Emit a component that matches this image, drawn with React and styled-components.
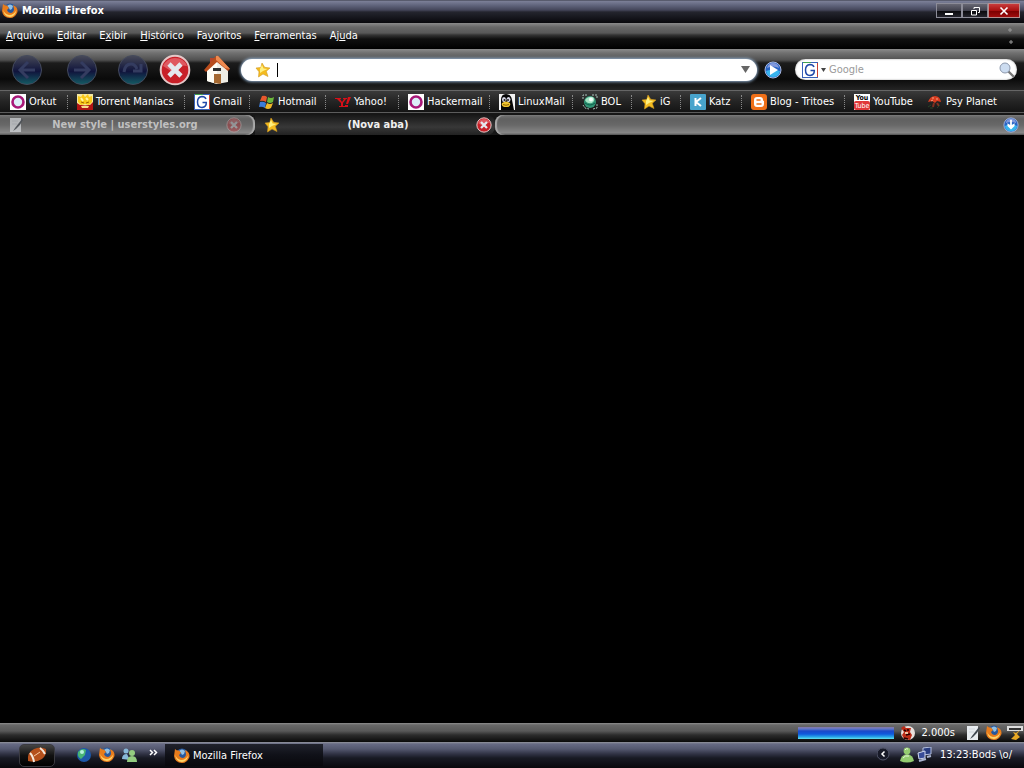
import React from 'react';
import styled, { createGlobalStyle } from 'styled-components';

const GlobalStyle = createGlobalStyle`
  * {
    box-sizing: border-box;
  }
  body {
    margin: 0;
    background: #000;
    color: #fff;
    font-family: "DejaVu Sans Condensed", "DejaVu Sans", sans-serif;
    font-size: 11px;
    line-height: 14px;
  }
  button, input {
    font: inherit;
    color: inherit;
  }
  svg {
    display: block;
    flex: none;
  }
`;

const Desktop = styled.div`
  display: flex;
  flex-direction: column;
  min-height: 100vh;
`;

const TitleBar = styled.header`
  display: flex;
  align-items: center;
  height: 23px;
  padding: 0 4px 2px 2px;
  gap: 4px;
  background: linear-gradient(#343642 0, #7c8098 1px, #62667e 5px, #44465a 10px, #24252e 12px, #08080c 100%);
`;

const WindowTitle = styled.h1`
  flex: 1;
  margin: 0;
  font-size: 11px;
  line-height: 14px;
`;

const WindowButtons = styled.div`
  display: flex;
`;

const WindowButton = styled.button`
  display: flex;
  align-items: center;
  justify-content: center;
  width: ${({ $close }) => ($close ? '32px' : '26px')};
  height: 15px;
  padding: 0;
  border: 1px solid ${({ $close }) => ($close ? '#b89090' : '#8c8c98')};
  background: ${({ $close }) =>
    $close
      ? 'linear-gradient(#c83c3c, #a81010 50%, #780000 51%, #a00c0c)'
      : 'linear-gradient(#686874, #40404c 50%, #08080c 51%, #24242c)'};
`;

const MenuBar = styled.nav`
  display: flex;
  align-items: center;
  height: 26px;
  padding: 0 10px 0 6px;
  gap: 13px;
  background: linear-gradient(#8a8a8a 0, #686868 4px, #585858 10px, #343434 12px, #101010 16px, #000 100%);
`;

const MenuLink = styled.a`
  color: #fff;
  text-decoration: none;
`;

const Throbber = styled.div`
  margin-left: auto;
`;

const Toolbar = styled.div`
  display: flex;
  align-items: center;
  height: 41px;
  padding: 0 7px 0 11px;
  background: linear-gradient(#8c8c8c 0, #707070 4px, #505050 11px, #1c1c1c 14px, #0a0a0a 30px, #242424 100%);
`;

const NavButtons = styled.div`
  display: flex;
  align-items: center;
  flex: none;
  width: 230px;
`;

const NavButton = styled.button`
  display: flex;
  justify-content: center;
  width: 32px;
  margin-right: ${({ $gap }) => $gap || 0}px;
  padding: 0;
  border: 0;
  background: none;
`;

const AddressBox = styled.div`
  display: flex;
  align-items: center;
  flex: 1;
  height: 22px;
  padding: 0 7px 0 14px;
  gap: 6px;
  border-radius: 11px;
  background: #fff;
  box-shadow: 0 0 3px 1px #8ea8c4;
`;

const Field = styled.input`
  flex: 1;
  min-width: 0;
  padding: 0;
  border: 0;
  outline: 0;
  background: transparent;
  color: #000;

  &::placeholder {
    color: #9a9a9a;
    opacity: 1;
  }
`;

const Caret = styled.span`
  width: 1px;
  height: 14px;
  background: #000;
`;

const GoButton = styled.button`
  flex: none;
  margin: 0 13px 0 7px;
  padding: 0;
  border: 0;
  background: none;
`;

const SearchBox = styled.div`
  display: flex;
  align-items: center;
  flex: none;
  width: 222px;
  height: 21px;
  padding: 0 2px 0 7px;
  gap: 3px;
  border-radius: 11px;
  background: #fff;
  box-shadow: inset 0 0 2px #999;
`;

const BookmarksBar = styled.nav`
  display: flex;
  align-items: center;
  height: 23px;
  padding: 1px 0 0 10px;
  border-top: 1px solid #666;
  border-bottom: 1px solid #5c5c5c;
  background: linear-gradient(#3a3a3a, #242424 50%, #141414);
  overflow: hidden;
`;

const Bookmark = styled.a`
  display: flex;
  align-items: center;
  flex: none;
  width: ${({ $width }) => $width}px;
  gap: 3px;
  padding-right: 9px;
  color: #fff;
  white-space: nowrap;
  text-decoration: none;
`;

const Divider = styled.span`
  height: 14px;
  margin-left: auto;
  border-left: 1px dotted #888;
`;

const TabStrip = styled.div`
  display: flex;
  height: 22px;
  padding: 2px 0 0;
  background: #161616;
`;

const grey = 'linear-gradient(#747474 0, #606060 4px, #686868 10px, #888 18px, #444 100%)';

const Tab = styled.div`
  display: flex;
  align-items: center;
  flex: none;
  width: ${({ $active }) => ($active ? '240px' : '255px')};
  padding: ${({ $active }) => ($active ? '0 3px 0 9px' : '0 13px 0 8px')};
  border-radius: 0 8px 8px 0;
  background: ${({ $active }) =>
    $active ? 'linear-gradient(#181818, #383838 60%, #222)' : grey};
  box-shadow: ${({ $active }) => ($active ? 'none' : 'inset -2px 0 1px #aaa')};
  color: ${({ $active }) => ($active ? '#f0f0f0' : '#c0c0c0')};
`;

const TabTitle = styled.button`
  flex: 1;
  padding: 0;
  border: 0;
  background: none;
  font-weight: bold;
  white-space: nowrap;
`;

const TabClose = styled.button`
  padding: 0;
  border: 0;
  background: none;
  opacity: ${({ $dim }) => ($dim ? 0.35 : 1)};
`;

const TabSpace = styled.div`
  display: flex;
  align-items: center;
  justify-content: flex-end;
  flex: 1;
  padding-right: 5px;
  border-radius: 8px 0 0 8px;
  background: ${grey};
  box-shadow: inset 2px 0 1px #aaa;
`;

const Page = styled.main`
  flex: 1;
  background: #000;
`;

const StatusBar = styled.footer`
  display: flex;
  align-items: center;
  justify-content: flex-end;
  height: 19px;
  gap: 6px;
  background: linear-gradient(#8e8e8e 0, #686868 2px, #585858 8px, #2c2c2c 12px, #0a0a0a 100%);
`;

const LoadBar = styled.div`
  width: 96px;
  height: 12px;
  background: linear-gradient(#8878a8 0, #6078c8 2px, #1c48c8 4px, #1058dc 7px, #28a8e8 10px, #68e4ee 100%);
`;

const StatusIcons = styled.div`
  display: flex;
  gap: 5px;
  padding: 0 1px 0 4px;
`;

const Taskbar = styled.footer`
  display: flex;
  align-items: center;
  height: 26px;
  padding: 0 12px 0 19px;
  background: linear-gradient(#92949c 0, #666a84 2px, #54586f 7px, #303244 12px, #181a24 16px, #08080c 100%);
`;

const StartButton = styled.button`
  display: flex;
  align-items: center;
  justify-content: center;
  width: 36px;
  height: 23px;
  padding: 0;
  border: 1px solid #3a3a40;
  border-radius: 5px;
  background: linear-gradient(#444, #111 50%, #000);
`;

const QuickLaunch = styled.div`
  display: flex;
  align-items: center;
  gap: 7px;
  width: 110px;
  padding-left: 21px;
`;

const TaskButton = styled.button`
  display: flex;
  align-items: center;
  width: 158px;
  height: 22px;
  padding: 2px 9px 0;
  gap: 3px;
  border: 0;
  background: linear-gradient(#20222c, #101118 50%, #08080c);
`;

const Tray = styled.div`
  display: flex;
  align-items: center;
  margin-left: auto;
  gap: 3px;
`;

const Clock = styled.span`
  margin-left: 4px;
`;

const Firefox = ({ size = 16 }) => (
  <svg width={size} height={size} viewBox="0 0 16 16">
    <circle cx="8" cy="6.5" r="6" fill="#28589c" />
    <path d="M5 3Q8 0 11 3L10 6 8 7 7 5Z" fill="#90c0e4" />
    <path d="M1 1Q3 3 5 2.5L7 5 5 7Q6 10 9 10Q12 9 12 6L11 2Q16 4 15.5 9Q13 15 8 15Q1 15 0 8Z" fill="#e87c1c" />
    <path d="M1 6Q2 11 7 12Q12 12 14.5 7Q13 14 8 14Q2 14 1 6Z" fill="#ffd468" />
  </svg>
);

const Star = () => (
  <svg width="16" height="16" viewBox="0 0 16 16">
    <path d="M7 1L9.7 5.3 15 6 11.3 9.3 13 14.5 8 12 3.5 15 4 9.8 1 6 5.8 5.5Z" fill="#f4bc20" stroke="#d09820" strokeWidth=".6" />
    <path d="M7 3L8.6 6.4 12.5 7 8 9 5 11 5 7Z" fill="#fff080" />
  </svg>
);

const Ring = () => (
  <svg width="16" height="16" viewBox="0 0 16 16">
    <rect width="16" height="16" fill="#fff" />
    <circle cx="8" cy="8" r="5.5" fill="#dceef8" stroke="#a81878" strokeWidth="2.6" />
  </svg>
);

const GoogleG = () => (
  <svg width="16" height="16" viewBox="0 0 16 16">
    <rect x=".5" y=".5" width="15" height="15" fill="#fff" stroke="#3860b8" />
    <path d="M15.5 1V15" stroke="#c84030" />
    <path d="M1 .5H9" stroke="#40a050" />
    <path d="M12 5Q11 2.5 8 2.5Q3.5 3 3.5 8Q3.5 13.5 8 13.5Q12.5 13 12.3 8.5H8.5" fill="none" stroke="#2048a8" strokeWidth="1.5" />
  </svg>
);

const Torrent = () => (
  <svg width="16" height="16" viewBox="0 0 16 16">
    <rect width="16" height="16" fill="#f4e8a0" />
    <path d="M0 9L3 11 13 11 16 8V16H0Z" fill="#b01414" />
    <path d="M1 2L4 3 6 0 8 3 11 0 12 3 15 2V8L12 11 8 10 4 11 1 8Z" fill="#f8c818" />
    <path d="M4 4L6 7M9 4L11 6" stroke="#fff4a0" strokeWidth="2" />
    <path d="M4 8L7 9M9 9L12 8" stroke="#a06000" />
    <path d="M4 12Q8 11 12 12L11 14H5Z" fill="#f8dc88" />
  </svg>
);

const Windows = () => (
  <svg width="16" height="16" viewBox="0 0 16 16">
    <path d="M3 2Q6 1 8 3L7 8Q4 6 1 7Z" fill="#e8582c" />
    <path d="M9 3Q12 5 15 3L14 8Q11 10 8 8Z" fill="#6cb83c" />
    <path d="M1 8Q4 7 7 9L6 14Q3 12 0 13Z" fill="#3c7cd8" />
    <path d="M8 9Q11 11 14 9L12 14Q9 16 6 14Z" fill="#f0b828" />
  </svg>
);

const Yahoo = () => (
  <svg width="16" height="16" viewBox="0 0 16 16">
    <path d="M0 4H6V5H5L7 8 9 5H8V4H12V5H11L8 9V12H10V13H4V12H6V9L2 5H0ZM13 3H16L13 10H11ZM10 11H13V13H10Z" fill="#d81018" />
  </svg>
);

const Penguin = () => (
  <svg width="16" height="16" viewBox="0 0 16 16">
    <rect width="16" height="16" fill="#f4f4f4" />
    <path d="M2 16V6Q2 0 7 0Q12 0 13 6L15 16Z" fill="#060606" />
    <ellipse cx="5" cy="5.5" rx="2" ry="2.5" fill="#d8d8e8" />
    <ellipse cx="9.5" cy="5.5" rx="2" ry="2.5" fill="#d8d8e8" />
    <circle cx="5.5" cy="6" r="1" fill="#222" />
    <circle cx="9" cy="6" r="1" fill="#222" />
    <path d="M3 9Q7 6 11 9Q12 12 9 13H5Q2 12 3 9Z" fill="#f0c430" />
    <path d="M4 10.5Q7 12 10 10.5" stroke="#8c6400" fill="none" />
  </svg>
);

const Bol = () => (
  <svg width="16" height="16" viewBox="0 0 16 16">
    <circle cx="8" cy="8" r="6" fill="#309474" />
    <path d="M3 6Q6 2 11 3Q14 6 10 9Q5 10 3 6Z" fill="#a4e4c4" />
    <circle cx="9" cy="5.5" r="2" fill="#f0fff8" />
    <path d="M1 5V1H6M10 1H15V5M1 11L3 14 7 15M11 15L15 14V10" stroke="#a8c0b8" fill="none" strokeDasharray="2 1" />
    <path d="M3 9Q8 13 13 9" stroke="#0c604c" fill="none" />
  </svg>
);

const Katz = () => (
  <svg width="16" height="16" viewBox="0 0 16 16">
    <rect width="16" height="16" rx="1" fill="#48a4cc" />
    <path d="M5.5 4V12M11 4L6 8 11 12" stroke="#fff" strokeWidth="2" fill="none" />
  </svg>
);

const Blogger = () => (
  <svg width="16" height="16" viewBox="0 0 16 16">
    <rect width="16" height="16" rx="3" fill="#f07018" />
    <path d="M6 3H9Q12 3 12 6Q12 7 13 7V10Q13 13 10 13H6Q3 13 3 10V6Q3 3 6 3Z" fill="#fff" />
    <path d="M6 6H9M6 10H10" stroke="#f07018" strokeWidth="1.5" strokeLinecap="round" />
  </svg>
);

const YouTube = () => (
  <svg width="16" height="16" viewBox="0 0 16 16">
    <rect width="16" height="16" fill="#fff" />
    <rect y="7" width="16" height="9" rx="2" fill="#e03838" />
    <text x="8" y="6" textAnchor="middle" fontSize="7" fontWeight="bold" fill="#000">You</text>
    <text x="8" y="14" textAnchor="middle" fontSize="7" fill="#fff">Tube</text>
  </svg>
);

const Mushroom = () => (
  <svg width="16" height="16" viewBox="0 0 16 16">
    <path d="M1 8Q3 2 8 2Q13 2 14 8L10 7 8 9 5 7Z" fill="#d83c20" />
    <path d="M5 4H7M9 5H11M4 7L6 6" stroke="#f8a080" />
    <path d="M7 9L6 13M10 9L12 12" stroke="#803020" strokeWidth="2" />
    <path d="M1 13L4 11M3 14H6M10 14L13 11" stroke="#284428" />
  </svg>
);

const CloseOrb = ({ size = 16 }) => (
  <svg width={size} height={size} viewBox="0 0 32 32">
    <circle cx="16" cy="16" r="14.3" fill="#c82028" stroke="#e4c8c8" strokeWidth="2" />
    <path d="M4 12Q8 4 16 4Q25 4 28 12Q18 10 12 17Z" fill="#e87078" opacity=".7" />
    <path d="M10 10L22 22M22 10L10 22" stroke="#e4e8ee" strokeWidth="4.6" />
  </svg>
);

const NavOrb = ({ children }) => (
  <svg width="32" height="32" viewBox="0 0 32 32">
    <defs>
      <linearGradient id="orb" x1="0" y1="0" x2="0" y2="1">
        <stop offset="0" stopColor="#484a58" />
        <stop offset=".3" stopColor="#282c48" />
        <stop offset=".55" stopColor="#10143c" />
        <stop offset="1" stopColor="#145c64" />
      </linearGradient>
    </defs>
    <circle cx="16" cy="16" r="14.5" fill="url(#orb)" stroke="#444a5c" />
    <g fill="none" stroke="#343c60" strokeWidth="3">{children}</g>
  </svg>
);

const House = () => (
  <svg width="28" height="32" viewBox="0 0 28 32">
    <path d="M4 14L14 6 25 15V28L14 30 4 27Z" fill="#efede4" />
    <path d="M4 14L14 7V30L4 27Z" fill="#fffdf4" />
    <path d="M7 4H11V10H7Z" fill="#b4442c" />
    <path d="M1 16L12 3Q14 1 16 3L27 15 25 17 14 8 3 18Z" fill="#b84c1c" />
    <path d="M13 2Q15 1 16 3L27 15 22 14 13 6Z" fill="#ee8a50" />
    <path d="M11 20H18V30L11 29Z" fill="#a46830" />
    <path d="M10 14H18V17H10Z" fill="#303030" />
  </svg>
);

const BlueOrb = ({ size = 18, d }) => (
  <svg width={size} height={size} viewBox="0 0 18 18">
    <circle cx="9" cy="9" r="8" fill="#2864c4" stroke="#a8b8e0" />
    <path d="M2 10Q9 7 16 10Q15 16 9 16Q3 16 2 10Z" fill="#38b4ee" />
    <path d="M3 7Q4 2 9 2Q14 2 15 7Q9 4 3 7Z" fill="#8098dc" />
    <path d={d} fill="#fff" />
  </svg>
);

const NotePad = ({ dim }) => (
  <svg width="16" height="16" viewBox="0 0 16 16" opacity={dim ? 0.6 : 1}>
    <path d="M2 1H13V15H2Z" fill="#e8ecf0" />
    <path d="M4 4H10M4 7H9" stroke="#d0d6dc" />
    <path d="M15 3Q12 9 8 12L5 14 7 11 14 2Z" fill="#404850" />
  </svg>
);

const Buddy = ({ color = '#94cc70' }) => (
  <svg width="14" height="16" viewBox="0 0 14 16">
    <circle cx="7" cy="4" r="3.4" fill={color} />
    <path d="M0 14Q1 8 7 7Q13 8 14 14Q7 17 0 14Z" fill={color} />
    <path d="M5 3Q6 1 8 2M3 11Q5 8 9 9" stroke="#e8f8dc" fill="none" />
  </svg>
);

const menus = [
  ['', 'A', 'rquivo'],
  ['', 'E', 'ditar'],
  ['E', 'x', 'ibir'],
  ['', 'H', 'istórico'],
  ['Fa', 'v', 'oritos'],
  ['', 'F', 'erramentas'],
  ['Aj', 'u', 'da'],
];

const bookmarks = [
  { name: 'Orkut', icon: Ring, width: 67 },
  { name: 'Torrent Maniacs', icon: Torrent, width: 117 },
  { name: 'Gmail', icon: GoogleG, width: 65 },
  { name: 'Hotmail', icon: Windows, width: 76 },
  { name: 'Yahoo!', icon: Yahoo, width: 73 },
  { name: 'Hackermail', icon: Ring, width: 91 },
  { name: 'LinuxMail', icon: Penguin, width: 83 },
  { name: 'BOL', icon: Bol, width: 59 },
  { name: 'iG', icon: Star, width: 49 },
  { name: 'Katz', icon: Katz, width: 61 },
  { name: 'Blog - Tritoes', icon: Blogger, width: 103 },
  { name: 'YouTube', icon: YouTube, width: 73, last: true },
  { name: 'Psy Planet', icon: Mushroom, width: 80, last: true },
];

const App = () => {
  return (
    <Desktop>
      <GlobalStyle />
      <TitleBar>
        <Firefox />
        <WindowTitle>Mozilla Firefox</WindowTitle>
        <WindowButtons>
          <WindowButton aria-label="Minimizar">
            <svg width="12" height="12"><path d="M2 9H10" stroke="#fff" strokeWidth="2" /></svg>
          </WindowButton>
          <WindowButton aria-label="Restaurar">
            <svg width="12" height="12"><path d="M5 4V2.5H10.5V7.5H9M2.5 5.5H7.5V10H2.5Z" fill="none" stroke="#fff" /></svg>
          </WindowButton>
          <WindowButton $close aria-label="Fechar">
            <svg width="12" height="12"><path d="M2.5 2.5L9.5 9.5M9.5 2.5L2.5 9.5" stroke="#fff" strokeWidth="1.6" /></svg>
          </WindowButton>
        </WindowButtons>
      </TitleBar>

      <MenuBar>
        {menus.map(([before, key, after]) => (
          <MenuLink href="#" key={before + key}>
            {before}<u>{key}</u>{after}
          </MenuLink>
        ))}
        <Throbber>
          <svg width="12" height="20"><path d="M6 4H10M8 2V6M7 16H11M9 14V18" stroke="#999" /></svg>
        </Throbber>
      </MenuBar>

      <Toolbar>
        <NavButtons>
          <NavButton $gap={23} aria-label="Voltar">
            <NavOrb><path d="M17 8L9 16 17 24M10 16H24" /></NavOrb>
          </NavButton>
          <NavButton $gap={19} aria-label="Avançar">
            <NavOrb><path d="M15 8L23 16 15 24M22 16H8" /></NavOrb>
          </NavButton>
          <NavButton $gap={10} aria-label="Recarregar">
            <NavOrb><path d="M7 18Q8 10 14 10Q18 10 20 15M24 10V17H16" /></NavOrb>
          </NavButton>
          <NavButton $gap={10} aria-label="Parar"><CloseOrb size={32} /></NavButton>
          <NavButton aria-label="Página inicial"><House /></NavButton>
        </NavButtons>
        <AddressBox>
          <Star />
          <Caret />
          <Field aria-label="Endereço" />
          <svg width="9" height="7"><path d="M0 0H9L4.500 7Z" fill="#666" /></svg>
        </AddressBox>
        <GoButton aria-label="Ir"><BlueOrb d="M6 4L14 9 6 14Z" /></GoButton>
        <SearchBox>
          <GoogleG />
          <svg width="5" height="4"><path d="M0 0H5L2.5 4Z" fill="#444" /></svg>
          <Field placeholder="Google" aria-label="Pesquisar" />
          <svg width="16" height="16" viewBox="0 0 16 16">
            <path d="M9 9L15 15" stroke="#777" strokeWidth="2.4" />
            <circle cx="6" cy="6" r="5" fill="#ccdcf0" stroke="#8c98ac" />
          </svg>
        </SearchBox>
      </Toolbar>

      <BookmarksBar>
        {bookmarks.map(({ name, icon: Icon, width, last }) => (
          <Bookmark href="#" key={name} $width={width}>
            <Icon />
            {name}
            {!last && <Divider />}
          </Bookmark>
        ))}
      </BookmarksBar>

      <TabStrip>
        <Tab>
          <NotePad dim />
          <TabTitle>New style | userstyles.org</TabTitle>
          <TabClose $dim aria-label="Fechar aba"><CloseOrb /></TabClose>
        </Tab>
        <Tab $active>
          <Star />
          <TabTitle>(Nova aba)</TabTitle>
          <TabClose aria-label="Fechar aba"><CloseOrb /></TabClose>
        </Tab>
        <TabSpace>
          <BlueOrb size={16} d="M8 3H10V9L13 7V10L9 14 5 10V7L8 9Z" />
        </TabSpace>
      </TabStrip>

      <Page />

      <StatusBar>
        <LoadBar />
        <svg width="16" height="16" viewBox="0 0 16 16">
          <circle cx="8" cy="8" r="7" fill="#e8e0dc" />
          <path d="M1 3L4 1 6 3 11 3 10 7 12 10 10 15 4 14 2 10 4 7Z" fill="#bc2c18" />
          <path d="M4 5L6 6M7 5H9M6 10L10 9M4 13L8 14" stroke="#200" strokeWidth="1.5" />
          <path d="M5 8H8" stroke="#f0c0a0" strokeWidth="2" />
        </svg>
        <span>2.000s</span>
        <StatusIcons>
          <NotePad />
          <Firefox />
          <svg width="16" height="16" viewBox="0 0 16 16">
            <path d="M0 1H16V6H0Z" fill="#ddd" />
            <path d="M2 3H14V5H2Z" fill="#333" />
            <path d="M13 5L10 9 13 12 9 15 4 14 8 10 6 7 9 8Z" fill="#e8a824" />
          </svg>
        </StatusIcons>
      </StatusBar>

      <Taskbar>
        <StartButton aria-label="Iniciar">
          <svg width="22" height="18" viewBox="0 0 22 18">
            <path d="M2 15Q1 6 8 3Q14 0 20 3Q21 9 16 13Q10 17 2 15Z" fill="#b4501c" />
            <path d="M4 7Q7 10 8 16M14 2Q17 4 19 8" stroke="#f4e8dc" strokeWidth="2" fill="none" />
            <path d="M8 10L14 6" stroke="#f8c8a0" />
          </svg>
        </StartButton>
        <QuickLaunch>
          <svg width="16" height="16" viewBox="0 0 16 16">
            <circle cx="8" cy="8" r="7" fill="#1c58a8" />
            <path d="M2 5Q6 0 10 3L9 8 5 12Q1 10 2 5Z" fill="#48b474" />
            <circle cx="6" cy="5" r="2" fill="#b4f0dc" />
          </svg>
          <Firefox />
          <svg width="16" height="16" viewBox="0 0 16 16">
            <circle cx="4" cy="4" r="2.5" fill="#88b8d8" />
            <path d="M0 12Q0 7 5 7L8 13Z" fill="#88b8d8" />
            <circle cx="10" cy="6" r="3" fill="#94cc80" />
            <path d="M5 15Q5 9 10 9Q15 9 15 15Z" fill="#94cc80" />
          </svg>
          <svg width="14" height="14"><path d="M5 2L7.500 4.500 5 7M9 2L11.500 4.500 9 7" stroke="#fff" strokeWidth="1.5" fill="none" /></svg>
        </QuickLaunch>
        <TaskButton>
          <Firefox />
          Mozilla Firefox
        </TaskButton>
        <Tray>
          <svg width="20" height="16" viewBox="0 0 20 16">
            <circle cx="6" cy="7" r="6" fill="#181a28" stroke="#505468" />
            <path d="M7.5 4.5L5 7 7.5 9.5" stroke="#fff" strokeWidth="1.5" fill="none" />
          </svg>
          <Buddy />
          <svg width="16" height="16" viewBox="0 0 16 16">
            <path d="M6 1L14 0V7L6 8Z" fill="#283c80" stroke="#b4c0e0" />
            <path d="M1 6L8 4V11L2 12Z" fill="#384c98" stroke="#d0d8f0" />
            <path d="M2 14L9 12M10 10L14 9" stroke="#aab4d0" strokeWidth="2" />
          </svg>
          <Clock>13:23:Bods \o/</Clock>
        </Tray>
      </Taskbar>
    </Desktop>
  );
};

export default App;
